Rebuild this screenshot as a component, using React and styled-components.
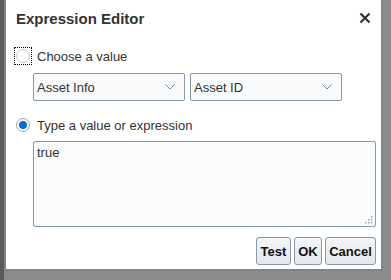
import React from 'react';
import styled, { createGlobalStyle } from 'styled-components';

const Global = createGlobalStyle`
  html, body { margin: 0; padding: 0; }
  body {
    width: 391px;
    height: 280px;
    background: #6e6e6e;
    font-family: Arial, "Liberation Sans", sans-serif;
    overflow: hidden;
  }
`;

const Backdrop = styled.div`
  width: 391px;
  height: 280px;
  padding: 0 0 0 4px;
  box-sizing: border-box;
  background: linear-gradient(90deg, #5a5a5a 0 4px, #8c8c8c 4px);
`;

const Dialog = styled.div`
  width: 379px;
  height: 271px;
  box-sizing: border-box;
  background: #ffffff;
  border: 2px solid #7d858d;
  border-top: none;
  display: flex;
  flex-direction: column;
  padding: 8px 5px 0 10px;
`;

const Header = styled.div`
  display: flex;
  align-items: center;
  justify-content: space-between;
  height: 20px;
  padding-right: 5px;
`;

const Title = styled.h1`
  margin: 0;
  font-size: 15px;
  font-weight: bold;
  color: #333333;
`;

const Close = styled.button`
  border: none;
  background: none;
  padding: 0;
  width: 12px;
  height: 12px;
  display: flex;
  cursor: pointer;
`;

const Body = styled.div`
  display: flex;
  flex-direction: column;
  margin-top: 19px;
`;

const RadioRow = styled.label`
  display: flex;
  align-items: center;
  gap: 7px;
  height: 18px;
  font-size: 13px;
  color: #333333;
  margin-top: ${p => p.$top || 0}px;
`;

const FocusRing = styled.span`
  display: flex;
  padding: 1px;
  margin: -2px;
  border: 1px dotted ${p => (p.$focus ? '#000' : 'transparent')};
`;

const Radio = styled.span`
  width: 14px;
  height: 14px;
  box-sizing: border-box;
  border-radius: 50%;
  border: 1px solid ${p => (p.$checked ? '#9aa6b2' : '#c4ccd4')};
  background: #ffffff;
  display: flex;
  align-items: center;
  justify-content: center;
  &::after {
    content: '';
    width: 8px;
    height: 8px;
    border-radius: 50%;
    background: ${p => (p.$checked ? '#0a6ed1' : 'transparent')};
  }
`;

const Indent = styled.div`
  padding-left: 17px;
  display: flex;
  gap: 5px;
  margin-top: ${p => p.$top || 0}px;
`;

const Select = styled.div`
  width: 152px;
  height: 28px;
  box-sizing: border-box;
  border: 1px solid #8a98a6;
  border-radius: 2px;
  background: #f9fafc;
  display: flex;
  align-items: center;
  justify-content: space-between;
  padding: 0 9px 0 3px;
  font-size: 13px;
  color: #333333;
`;

const TextArea = styled.div`
  position: relative;
  width: 344px;
  height: 86px;
  box-sizing: border-box;
  border: 1px solid #8a98a6;
  border-radius: 2px;
  background: #fbfcfe;
  padding: 3px 3px;
  font-size: 13px;
  color: #333333;
`;

const Grip = styled.svg`
  position: absolute;
  right: 2px;
  bottom: 2px;
`;

const Footer = styled.div`
  display: flex;
  justify-content: flex-end;
  gap: 3px;
  margin-top: 10px;
`;

const Button = styled.button`
  width: ${p => p.$w}px;
  height: 28px;
  box-sizing: border-box;
  padding: 0;
  border: 1px solid #8a98a6;
  border-radius: 3px;
  background: linear-gradient(#f3f5f7, #e4e8ec);
  font-family: Arial, "Liberation Sans", sans-serif;
  font-size: 13px;
  font-weight: bold;
  color: #111111;
`;

const Chevron = () => (
  <svg width="10" height="6" viewBox="0 0 10 6">
    <path d="M0.5 0.5l4.5 4.5 4.5-4.5" fill="none" stroke="#7d8894" strokeWidth="1" />
  </svg>
);

export default function App() {
  return (
    <Backdrop>
      <Global />
      <Dialog>
        <Header>
          <Title>Expression Editor</Title>
          <Close aria-label="Close">
            <svg width="12" height="12" viewBox="0 0 12 12">
              <path d="M1.5 1.5l9 9M10.5 1.5l-9 9" stroke="#333" strokeWidth="2.2" />
            </svg>
          </Close>
        </Header>
        <Body>
          <RadioRow>
            <FocusRing $focus>
              <Radio />
            </FocusRing>
            Choose a value
          </RadioRow>
          <Indent $top={8}>
            <Select>
              Asset Info
              <Chevron />
            </Select>
            <Select>
              Asset ID
              <Chevron />
            </Select>
          </Indent>
          <RadioRow $top={15}>
            <FocusRing>
              <Radio $checked />
            </FocusRing>
            Type a value or expression
          </RadioRow>
          <Indent $top={7}>
            <TextArea>
              true
              <Grip width="8" height="8" viewBox="0 0 8 8">
                <g fill="#9aa4ae">
                  <rect x="6" y="0" width="1.5" height="1.5" />
                  <rect x="3" y="3" width="1.5" height="1.5" />
                  <rect x="6" y="3" width="1.5" height="1.5" />
                  <rect x="0" y="6" width="1.5" height="1.5" />
                  <rect x="3" y="6" width="1.5" height="1.5" />
                  <rect x="6" y="6" width="1.5" height="1.5" />
                </g>
              </Grip>
            </TextArea>
          </Indent>
          <Footer>
            <Button $w={35}>Test</Button>
            <Button $w={28}>OK</Button>
            <Button $w={51}>Cancel</Button>
          </Footer>
        </Body>
      </Dialog>
    </Backdrop>
  );
}
